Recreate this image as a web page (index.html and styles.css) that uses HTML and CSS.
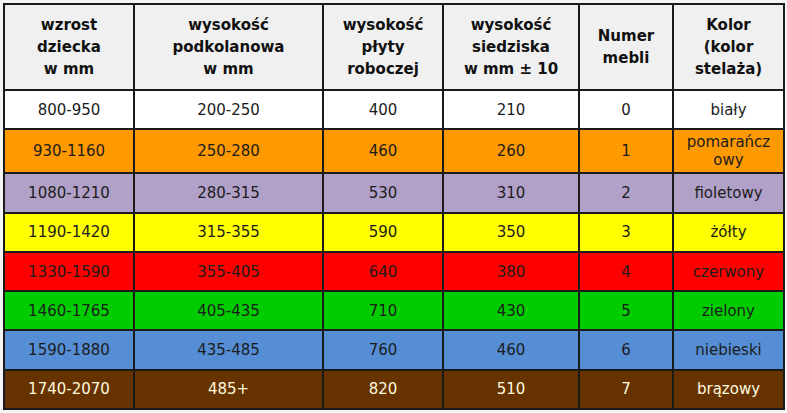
FILE: index.html
```html
<!DOCTYPE html>
<html lang="pl">
<head>
<meta charset="utf-8">
<title>Tabela wzrostu</title>
<link rel="stylesheet" href="styles.css">
</head>
<body>
<table class="sizes">
  <colgroup>
    <col class="c1"><col class="c2"><col class="c3"><col class="c4"><col class="c5"><col class="c6">
  </colgroup>
  <thead>
    <tr>
      <th>wzrost<br>dziecka<br>w mm</th>
      <th>wysokość<br>podkolanowa<br>w mm</th>
      <th>wysokość<br>płyty<br>roboczej</th>
      <th>wysokość<br>siedziska<br>w mm ± 10</th>
      <th>Numer<br>mebli</th>
      <th>Kolor<br>(kolor<br>stelaża)</th>
    </tr>
  </thead>
  <tbody>
    <tr class="r-white"><td>800-950</td><td>200-250</td><td>400</td><td>210</td><td>0</td><td>biały</td></tr>
    <tr class="r-orange"><td>930-1160</td><td>250-280</td><td>460</td><td>260</td><td>1</td><td>pomarańcz<wbr>owy</td></tr>
    <tr class="r-purple"><td>1080-1210</td><td>280-315</td><td>530</td><td>310</td><td>2</td><td>fioletowy</td></tr>
    <tr class="r-yellow"><td>1190-1420</td><td>315-355</td><td>590</td><td>350</td><td>3</td><td>żółty</td></tr>
    <tr class="r-red"><td>1330-1590</td><td>355-405</td><td>640</td><td>380</td><td>4</td><td>czerwony</td></tr>
    <tr class="r-green"><td>1460-1765</td><td>405-435</td><td>710</td><td>430</td><td>5</td><td>zielony</td></tr>
    <tr class="r-blue"><td>1590-1880</td><td>435-485</td><td>760</td><td>460</td><td>6</td><td>niebieski</td></tr>
    <tr class="r-brown"><td>1740-2070</td><td>485+</td><td>820</td><td>510</td><td>7</td><td>brązowy</td></tr>
  </tbody>
</table>
</body>
</html>
```
FILE: styles.css
```css
html, body {
  margin: 0;
  padding: 0;
  background: #f5f5f5;
}
body {
  padding: 3px;
  font-family: "DejaVu Sans", Verdana, sans-serif;
}
.sizes {
  border-collapse: collapse;
  table-layout: fixed;
  width: 782px;
  border: 2px solid #1a1a1a;
}
.c1 { width: 130px; }
.c2 { width: 189px; }
.c3 { width: 120px; }
.c4 { width: 136px; }
.c5 { width: 94px; }
.c6 { width: 111px; }

.sizes th,
.sizes td {
  border: 2px solid #1a1a1a;
  text-align: center;
  vertical-align: middle;
  padding: 3px 2px;
}
.sizes th {
  background: #f0f0f0;
  color: #111;
  font-weight: bold;
  font-size: 15px;
  line-height: 22px;
  height: 78px;
}
.sizes td {
  font-size: 15px;
  line-height: 18px;
  color: #1c1c1c;
  height: 31.3px;
}
.r-white td { background: #ffffff; }
.r-orange td { background: #ff9900; }
.r-purple td { background: #b1a0c7; }
.r-yellow td { background: #ffff00; }
.r-red td { background: #ff0000; }
.r-green td { background: #00cc00; }
.r-blue td { background: #558ed5; }
.r-brown td { background: #663300; color: #fff8dc; }
```
